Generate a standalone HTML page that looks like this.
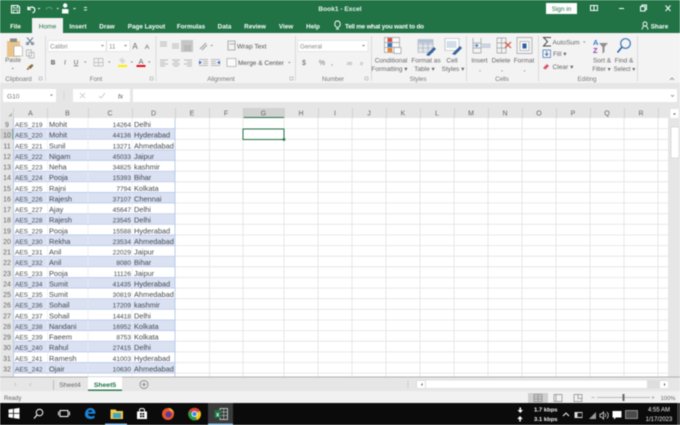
<!DOCTYPE html>
<html><head><meta charset="utf-8"><title>Book1 - Excel</title>
<style>
html,body{margin:0;padding:0;width:680px;height:425px;overflow:hidden;background:#fff}
svg{display:block;filter:blur(0.5px)}
text{font-family:"Liberation Sans",sans-serif}
.g text{font-size:7.4px;fill:#444850}
.g text:nth-child(4n+1){font-size:6.5px}
.g text:nth-child(4n+3){font-size:6.6px}
.h text{font-size:7px;fill:#666;text-anchor:middle}
.t text{font-size:6.3px;fill:#fff;text-anchor:middle;font-weight:bold}
.m text{text-anchor:middle}
.l text{font-size:6.2px;fill:#777;text-anchor:middle}
</style></head><body>
<svg width="680" height="425" viewBox="0 0 680 425" xmlns="http://www.w3.org/2000/svg">
<rect width="680" height="425" fill="#fff"/>
<!-- title bar -->
<rect width="680" height="33" fill="#217346"/>
<g fill="none" stroke="#fff" stroke-width="1.1">
<path d="M11.5 5.5h6.5l1.5 1.5v6h-8z"/><path d="M13.5 5.5v2.5h4v-2.5M13.5 13v-3h4v3" stroke-width=".8"/>
<path d="M28 6.5v3h3M28.3 9.2c1-2.5 5.500-3 6.500 0 .5 2-1 3.500-2.500 3.500" stroke-width="1.2"/>
<path d="M46 9.500c1-2.500 5-3 6.300 0" stroke="#5d9a78"/>
</g>
<path d="M63 5.500a2.200 2.200 0 1 1 4.400 0a2.200 2.200 0 1 1-4.400 0M62 9h5.500l1.500 1.500-1 1.500 1 1.500h-7z" fill="#fff"/>
<path d="M37.500 8h3l-1.500 1.500zM56.500 8h2.500l-1.200 1.500zM73 8h3l-1.500 1.500zM84 7h3v1h-3zM84 9.500h3v1h-3z" fill="#e6f0ea"/>
<text x="340" y="11" font-size="6.600" fill="#e8f2ec" text-anchor="middle" font-weight="bold">Book1 - Excel</text>
<rect x="546" y="3" width="31" height="11" fill="#fff"/>
<text x="561.500" y="11" font-size="6.400" fill="#217346" text-anchor="middle">Sign in</text>
<g fill="none" stroke="#fff" stroke-width="1">
<path d="M590.500 5.500h7v5h-7zM594 5.500v5"/><path d="M619 8.500h5"/><path d="M640.500 6.500h4.500v4.500h-4.500zM642 6.500v-1.500h4.500v4.500h-1.500"/><path d="M665.500 5.500l5 5.500M670.500 5.500l-5 5.500"/>
</g>
<!-- tabs -->
<rect x="32" y="18" width="31" height="16" fill="#f3f3f3"/>
<g class="t">
<text x="15.500" y="28.500">File</text><text x="78" y="28.500">Insert</text><text x="107" y="28.500">Draw</text><text x="146.500" y="28.500">Page Layout</text><text x="191" y="28.500">Formulas</text><text x="224.500" y="28.500">Data</text><text x="255" y="28.500">Review</text><text x="286" y="28.500">View</text><text x="313" y="28.500">Help</text><text x="384.500" y="28.500" textLength="79">Tell me what you want to do</text><text x="659.500" y="28.500">Share</text>
</g>
<text x="47.500" y="28.500" font-size="6.600" fill="#217346" text-anchor="middle">Home</text>
<path d="M337 27.500c-3.500-2-2.500-6.500.5-6.500s4 4.500.5 6.500zM336 29h3" fill="none" stroke="#fff" stroke-width=".9"/>
<path d="M642 29.500c.5-3 1.500-3.500 3-3.500s2.500.5 3 3.500M643 24a2 2 0 1 1 4 0a2 2 0 1 1-4 0" fill="none" stroke="#fff" stroke-width=".9"/>
<!-- ribbon -->
<rect y="33" width="680" height="50" fill="#f3f3f3"/>
<rect y="83" width="680" height="25" fill="#e6e6e6"/>
<g fill="#dadada"><rect x="45" y="36" width="1" height="45"/><rect x="155.500" y="36" width="1" height="45"/><rect x="295" y="36" width="1" height="45"/><rect x="371" y="36" width="1" height="45"/><rect x="466" y="36" width="1" height="45"/><rect x="538" y="36" width="1" height="45"/><rect x="637" y="36" width="1" height="45"/></g>
<!-- clipboard -->
<rect x="7" y="41" width="13" height="16" fill="#e8c48a"/><rect x="10" y="38.500" width="7" height="3.500" fill="#8a8a8a"/><path d="M14 46h7l1.500 1.500v8.500h-8.500z" fill="#fff" stroke="#a0a0a0" stroke-width=".6"/>
<path d="M27 37.500l6 7M33 37.500l-6 7" stroke="#6d7f99" stroke-width="1"/><circle cx="27.500" cy="43.500" r="1.300" fill="none" stroke="#6d7f99" stroke-width=".7"/><circle cx="32.500" cy="43.500" r="1.300" fill="none" stroke="#6d7f99" stroke-width=".7"/>
<path d="M26.500 50h5v6h-5zM29 52.500h5v5.500h-5z" fill="#f7f7f7" stroke="#a8a8a8" stroke-width=".7"/>
<path d="M28 67l4-3 1.500 1.500-3 3.500zM26.500 69l2-1.500 1 1.500-2 1z" fill="#8a6a3e"/>
<text x="13" y="62" font-size="6.200" fill="#666" text-anchor="middle">Paste</text>
<path d="M11.500 68h2.500l-1.200 1.300z" fill="#777"/>
<path d="M39 77h3v3h-3z" fill="none" stroke="#999" stroke-width=".5"/><path d="M150 77h3v3h-3zM290 77h3v3h-3zM365 77h3v3h-3z" fill="none" stroke="#999" stroke-width=".5"/>
<g class="l"><text x="18.500" y="81">Clipboard</text><text x="96" y="81">Font</text><text x="221" y="81">Alignment</text><text x="333" y="81">Number</text><text x="418" y="81">Styles</text><text x="502" y="81">Cells</text><text x="587" y="81">Editing</text></g>
<!-- font -->
<rect x="48" y="40.500" width="58" height="11" fill="#fff" stroke="#dcdcdc" stroke-width=".6"/><rect x="107" y="40.500" width="23" height="11" fill="#fff" stroke="#dcdcdc" stroke-width=".6"/>
<text x="50" y="48.500" font-size="6.200" fill="#888">Calibri</text><text x="109" y="48.500" font-size="6.200" fill="#888">11</text>
<path d="M101 45h3l-1.500 1.500zM124 45h3l-1.500 1.500z" fill="#777"/>
<text x="135" y="49" font-size="8" fill="#666" text-anchor="middle">A</text><text x="147" y="49" font-size="6.800" fill="#666" text-anchor="middle">A</text>
<text x="53" y="64.500" font-size="6.400" fill="#555" font-weight="bold" text-anchor="middle">B</text><text x="65" y="64.500" font-size="6.400" fill="#555" font-style="italic" text-anchor="middle">I</text><text x="76" y="64.500" font-size="6.400" fill="#555" text-decoration="underline" text-anchor="middle">U</text>
<path d="M94 58.500h9v7.500h-9zM98.500 58.500v7.500M94 62.500h9" fill="none" stroke="#b5b5b5" stroke-width=".7"/>
<path d="M119 60l3-2.500 3.500 3.500-3 3z" fill="#d9d9d9"/><rect x="118" y="65" width="9" height="2" fill="#ffee00"/>
<text x="141" y="64" font-size="7.500" fill="#666" text-anchor="middle">A</text><rect x="136.500" y="65" width="9" height="2" fill="#e00d1c"/>
<path d="M84 61.500h2.500l-1.200 1.300zM108 61.500h2.500l-1.200 1.300zM130.500 61.500h2.500l-1.200 1.300zM148 61.500h2.500l-1.200 1.300z" fill="#777"/>
<!-- alignment -->
<rect x="181" y="40" width="12" height="12" fill="#c6c6c6"/>
<g stroke="#a8a8a8" stroke-width=".8" fill="none">
<path d="M160 42h7M160 44h7M160 46h7M172 44h7M172 46h7M172 48h7M184 46h7M184 48h7M184 50h7"/>
<path d="M160 60h8M160 62h5M160 64h8M160 66h5M172 60h8M173.500 62h5M172 64h8M173.500 66h5M184 60h8M187 62h5M184 64h8M187 66h5"/>
<path d="M199 59.500h9M199 65.500h9M211 59.500h9M211 65.500h9M203 61.500h5M203 63.500h5M211 61.500h5M211 63.500h5"/>
</g>
<path d="M199 60.500l3 2-3 2zM220 60.500l-3 2 3 2z" fill="#3b6fc0"/>
<path d="M200 49l6-6M202 50l5-5" stroke="#9a9a9a" stroke-width="1"/><path d="M210.500 45h2.500l-1.200 1.300z" fill="#777"/>
<path d="M228 41h7v9h-7zM229.500 44h5" fill="none" stroke="#999" stroke-width=".8"/>
<text x="237" y="48.500" font-size="6.600" fill="#555">Wrap Text</text>
<rect x="227" y="58.500" width="9" height="8" fill="#fafafa" stroke="#a5a5a5" stroke-width=".7"/>
<text x="238" y="65" font-size="6.500" fill="#555">Merge &amp; Center</text>
<path d="M288 62h2.500l-1.200 1.300z" fill="#777"/>
<!-- number -->
<rect x="298" y="40.500" width="70" height="11" fill="#fff" stroke="#dcdcdc" stroke-width=".6"/>
<text x="300" y="48.500" font-size="6.200" fill="#888">General</text><path d="M362 45h3l-1.500 1.500z" fill="#777"/>
<text x="304" y="65" font-size="7" fill="#666" text-anchor="middle">$</text><text x="322" y="65" font-size="7" fill="#777" text-anchor="middle">%</text><text x="332" y="65" font-size="7" fill="#666" text-anchor="middle">,</text>
<text x="349" y="65" font-size="4.500" fill="#7a8ca5" text-anchor="middle">.00</text><text x="361" y="65" font-size="4.500" fill="#7a8ca5" text-anchor="middle">.0</text>
<!-- styles -->
<path d="M384.500 37.500h15v15h-15zM384.500 42.500h15M384.500 47.500h15M392 37.500v15" fill="#fafafa" stroke="#9c9c9c" stroke-width=".7"/>
<rect x="387.500" y="38" width="4.500" height="4" fill="#d9503f"/><rect x="387.500" y="43" width="4.500" height="4" fill="#3a77c4"/><rect x="387.500" y="48" width="4.500" height="4" fill="#e98432"/>
<rect x="394" y="47.500" width="7" height="6" fill="#fff" stroke="#888" stroke-width=".6"/>
<path d="M418 39.500h15v13h-15zM418 44h15M418 48h15M423 39.500v13M428 39.500v13" fill="#dfe6ef" stroke="#a7a7a7" stroke-width=".6"/><rect x="418" y="39.500" width="15" height="3.500" fill="#b3c3d8"/>
<path d="M426 55l8-8 2 2-7 7z" fill="#35639d"/>
<path d="M445 38.500h14v12h-14z" fill="#fff" stroke="#a7a7a7" stroke-width=".6"/><rect x="446.500" y="41" width="10" height="7" fill="#d4deeb"/><path d="M452 54l8-8 2 2-7 7z" fill="#35639d"/>
<g font-size="6.500" fill="#666" class="m">
<text x="391" y="62.500">Conditional</text><text x="389.500" y="71">Formatting ▾</text><text x="426" y="62.500">Format as</text><text x="424.500" y="71">Table ▾</text><text x="452" y="62.500">Cell</text><text x="453" y="71">Styles ▾</text>
<text x="479.500" y="62.500">Insert</text><text x="501" y="62.500">Delete</text><text x="524" y="62.500">Format</text>
<text x="602" y="62.500">Sort &amp;</text><text x="624" y="62.500">Find &amp;</text><text x="601.500" y="71" font-size="6.100">Filter ▾</text><text x="624.500" y="71" font-size="6.100">Select ▾</text>
</g>
<!-- cells -->
<g fill="none" stroke="#9c9c9c" stroke-width=".7"><path d="M473 38v15M481 38v15M473 43h8M473 48h8M473 53h8"/><path d="M497 38h9v15h-9zM497 43h9M497 48h9M501.500 38v15"/><path d="M517 37.500h15v16h-15z"/></g>
<rect x="481" y="44" width="9" height="3.500" fill="#d0d8e4" stroke="#9fb1c9" stroke-width=".5"/><path d="M474 45.500l4 0M476 44l2 1.500-2 1.500" stroke="#3a77c4" fill="none" stroke-width=".8"/>
<path d="M505 42l6 6M511 42l-6 6" stroke="#d1503f" stroke-width="1.200"/>
<rect x="520" y="41.500" width="9" height="9" fill="#fafafa" stroke="#9c9c9c" stroke-width=".6"/><rect x="522.500" y="43.500" width="4" height="5" fill="#2f5f9e"/>
<path d="M479 70.500h2l-1 1zM501 70.500h2l-1 1zM523.500 70.500h2l-1 1z" fill="#777"/>
<!-- editing -->
<path d="M551 37.500h-7.500l4 4-4 4.500h7.500" fill="none" stroke="#4a4a4a" stroke-width="1"/>
<text x="552.500" y="44.500" font-size="6.600" fill="#666">AutoSum</text><path d="M583 41.500h2.500l-1.200 1.300z" fill="#777"/>
<rect x="543" y="50" width="7.500" height="7.500" fill="#f7f7f7" stroke="#4a7bb8" stroke-width=".8"/><path d="M546.700 51v4M545 53.500l1.700 2 1.700-2" stroke="#3467a8" fill="none" stroke-width=".8"/>
<text x="553" y="56" font-size="6.600" fill="#666">Fill ▾</text>
<path d="M543 68l4-4 2 2-3.500 3.500z" fill="#e0506a"/><text x="552.500" y="68.800" font-size="6.600" fill="#666">Clear ▾</text>
<text x="593" y="45" font-size="7.500" fill="#3a77c4" font-weight="bold">A</text><text x="593" y="53" font-size="7.500" fill="#8d3fa8" font-weight="bold">Z</text><path d="M599 43h9l-3.500 4v5l-2 1.500v-6.500z" fill="#909090"/>
<circle cx="625.500" cy="43.500" r="4.800" fill="none" stroke="#3c76b8" stroke-width="1.200"/><path d="M622 47l-4.500 5.500" stroke="#2c65a8" stroke-width="1.600"/>
<path d="M670 80l2-2 2 2" fill="none" stroke="#777" stroke-width=".7"/>
<!-- formula bar -->
<rect x="3" y="89" width="53" height="13" fill="#fff"/><text x="7" y="98.500" font-size="6.600" fill="#777">G10</text><path d="M50 94.500h3l-1.500 1.500z" fill="#777"/>
<rect x="73" y="89" width="57" height="13" fill="#fff"/><rect x="133" y="89" width="544" height="13" fill="#fff"/>
<path d="M64 92v7" stroke="#c8c8c8" stroke-dasharray="1 1"/>
<path d="M80 93l5 5M85 93l-5 5" stroke="#c3c3c3" stroke-width=".8"/><path d="M99 96l2 2 4-5" stroke="#c3c3c3" fill="none" stroke-width=".8"/>
<text x="120.500" y="98.500" font-size="6.500" font-style="italic" fill="#555" text-anchor="middle">fx</text>
<path d="M671 95l1.500 1.500 1.500-1.500" fill="none" stroke="#777" stroke-width=".7"/>
<!-- headers -->
<rect y="108" width="668" height="10" fill="#e6e6e6"/>
<rect x="243" y="108" width="41" height="10" fill="#d2d2d2"/><rect x="243" y="117" width="41" height="1" fill="#217346"/>
<path d="M12 116.500h-4l4-4z" fill="#b5b5b5"/>
<g stroke="#c9c9c9" stroke-width=".7"><path d="M13.500 108v10M47.500 108v10M88.500 108v10M132.500 108v10M175.500 108v10M209.500 108v10M243.500 108v10M284.500 108v10M318.500 108v10M352.500 108v10M386.500 108v10M420.500 108v10M454.500 108v10M488.500 108v10M522.500 108v10M556.500 108v10M590.500 108v10M624.500 108v10M658.500 108v10"/></g>
<g class="h"><text x="30.500" y="115.500">A</text><text x="67.500" y="115.500">B</text><text x="110" y="115.500">C</text><text x="153.500" y="115.500">D</text><text x="192" y="115.500">E</text><text x="226" y="115.500">F</text><text x="263.500" y="115.500">G</text><text x="301" y="115.500">H</text><text x="335" y="115.500">I</text><text x="369" y="115.500">J</text><text x="403" y="115.500">K</text><text x="437" y="115.500">L</text><text x="471" y="115.500">M</text><text x="505" y="115.500">N</text><text x="539" y="115.500">O</text><text x="573" y="115.500">P</text><text x="607" y="115.500">Q</text><text x="641" y="115.500">R</text></g>
<!-- row header bg -->
<rect x="0" y="118" width="13" height="259" fill="#e6e6e6"/>
<rect x="0" y="128.600" width="13" height="10.700" fill="#d2d2d2"/><rect x="12.500" y="128.600" width="1" height="10.700" fill="#217346"/>
<!-- bands -->
<g fill="#d9e1f2"><rect x="13" y="128.600" width="162" height="10.700"/><rect x="13" y="149.900" width="162" height="10.600"/><rect x="13" y="171.200" width="162" height="10.600"/><rect x="13" y="192.400" width="162" height="10.600"/><rect x="13" y="213.700" width="162" height="10.600"/><rect x="13" y="234.900" width="162" height="10.700"/><rect x="13" y="256.200" width="162" height="10.600"/><rect x="13" y="277.500" width="162" height="10.600"/><rect x="13" y="298.700" width="162" height="10.600"/><rect x="13" y="320" width="162" height="10.600"/><rect x="13" y="341.200" width="162" height="10.700"/><rect x="13" y="362.500" width="162" height="10.600"/></g>
<!-- grid -->
<g stroke="#e3e3e3" stroke-width=".8" fill="none">
<path d="M175 128.600H668M175 139.300H668M175 149.900H668M175 160.500H668M175 171.200H668M175 181.800H668M175 192.400H668M175 203H668M175 213.700H668M175 224.300H668M175 234.900H668M175 245.600H668M175 256.200H668M175 266.800H668M175 277.500H668M175 288.100H668M175 298.700H668M175 309.300H668M175 320H668M175 330.600H668M175 341.200H668M175 351.900H668M175 362.500H668M175 373.100H668"/>
<path d="M209.500 118V377M243 118V377M284 118V377M318 118V377M352 118V377M386 118V377M420 118V377M454 118V377M488 118V377M522 118V377M556 118V377M590 118V377M624 118V377M658 118V377"/>
<path d="M47.500 118V377M88 118V377M132 118V377" stroke="#e9edf5"/>
</g>
<g stroke="#b4c6e7" stroke-width=".7" fill="none"><path d="M13 128.600H175M13 139.300H175M13 149.900H175M13 160.500H175M13 171.200H175M13 181.800H175M13 192.400H175M13 203H175M13 213.700H175M13 224.300H175M13 234.900H175M13 245.600H175M13 256.200H175M13 266.800H175M13 277.500H175M13 288.100H175M13 298.700H175M13 309.300H175M13 320H175M13 330.600H175M13 341.200H175M13 351.900H175M13 362.500H175M13 373.100H175"/><path d="M175 118V377M13.500 118V377" stroke-width=".9"/></g>
<!-- row numbers -->
<g class="h"><text x="7" y="127">9</text><text x="7" y="137.600">10</text><text x="7" y="148.300">11</text><text x="7" y="158.900">12</text><text x="7" y="169.500">13</text><text x="7" y="180.200">14</text><text x="7" y="190.800">15</text><text x="7" y="201.400">16</text><text x="7" y="212">17</text><text x="7" y="222.700">18</text><text x="7" y="233.300">19</text><text x="7" y="243.900">20</text><text x="7" y="254.600">21</text><text x="7" y="265.200">22</text><text x="7" y="275.800">23</text><text x="7" y="286.500">24</text><text x="7" y="297.100">25</text><text x="7" y="307.700">26</text><text x="7" y="318.300">27</text><text x="7" y="329">28</text><text x="7" y="339.600">29</text><text x="7" y="350.200">30</text><text x="7" y="360.900">31</text><text x="7" y="371.500">32</text></g>
<!-- data -->
<g class="g">
<text x="15" y="127">AES_219</text><text x="49" y="127">Mohit</text><text x="131" y="127" text-anchor="end">14264</text><text x="134" y="127">Delhi</text>
<text x="15" y="137.600">AES_220</text><text x="49" y="137.600">Mohit</text><text x="131" y="137.600" text-anchor="end">44136</text><text x="134" y="137.600">Hyderabad</text>
<text x="15" y="148.300">AES_221</text><text x="49" y="148.300">Sunil</text><text x="131" y="148.300" text-anchor="end">13271</text><text x="134" y="148.300">Ahmedabad</text>
<text x="15" y="158.900">AES_222</text><text x="49" y="158.900">Nigam</text><text x="131" y="158.900" text-anchor="end">45033</text><text x="134" y="158.900">Jaipur</text>
<text x="15" y="169.500">AES_223</text><text x="49" y="169.500">Neha</text><text x="131" y="169.500" text-anchor="end">34825</text><text x="134" y="169.500">kashmir</text>
<text x="15" y="180.200">AES_224</text><text x="49" y="180.200">Pooja</text><text x="131" y="180.200" text-anchor="end">15393</text><text x="134" y="180.200">Bihar</text>
<text x="15" y="190.800">AES_225</text><text x="49" y="190.800">Rajni</text><text x="131" y="190.800" text-anchor="end">7794</text><text x="134" y="190.800">Kolkata</text>
<text x="15" y="201.400">AES_226</text><text x="49" y="201.400">Rajesh</text><text x="131" y="201.400" text-anchor="end">37107</text><text x="134" y="201.400">Chennai</text>
<text x="15" y="212">AES_227</text><text x="49" y="212">Ajay</text><text x="131" y="212" text-anchor="end">45647</text><text x="134" y="212">Delhi</text>
<text x="15" y="222.700">AES_228</text><text x="49" y="222.700">Rajesh</text><text x="131" y="222.700" text-anchor="end">23545</text><text x="134" y="222.700">Delhi</text>
<text x="15" y="233.300">AES_229</text><text x="49" y="233.300">Pooja</text><text x="131" y="233.300" text-anchor="end">15588</text><text x="134" y="233.300">Hyderabad</text>
<text x="15" y="243.900">AES_230</text><text x="49" y="243.900">Rekha</text><text x="131" y="243.900" text-anchor="end">23534</text><text x="134" y="243.900">Ahmedabad</text>
<text x="15" y="254.600">AES_231</text><text x="49" y="254.600">Anil</text><text x="131" y="254.600" text-anchor="end">22029</text><text x="134" y="254.600">Jaipur</text>
<text x="15" y="265.200">AES_232</text><text x="49" y="265.200">Anil</text><text x="131" y="265.200" text-anchor="end">8080</text><text x="134" y="265.200">Bihar</text>
<text x="15" y="275.800">AES_233</text><text x="49" y="275.800">Pooja</text><text x="131" y="275.800" text-anchor="end">11126</text><text x="134" y="275.800">Jaipur</text>
<text x="15" y="286.500">AES_234</text><text x="49" y="286.500">Sumit</text><text x="131" y="286.500" text-anchor="end">41435</text><text x="134" y="286.500">Hyderabad</text>
<text x="15" y="297.100">AES_235</text><text x="49" y="297.100">Sumit</text><text x="131" y="297.100" text-anchor="end">30819</text><text x="134" y="297.100">Ahmedabad</text>
<text x="15" y="307.700">AES_236</text><text x="49" y="307.700">Sohail</text><text x="131" y="307.700" text-anchor="end">17209</text><text x="134" y="307.700">kashmir</text>
<text x="15" y="318.300">AES_237</text><text x="49" y="318.300">Sohail</text><text x="131" y="318.300" text-anchor="end">14418</text><text x="134" y="318.300">Delhi</text>
<text x="15" y="329">AES_238</text><text x="49" y="329">Nandani</text><text x="131" y="329" text-anchor="end">16952</text><text x="134" y="329">Kolkata</text>
<text x="15" y="339.600">AES_239</text><text x="49" y="339.600">Faeem</text><text x="131" y="339.600" text-anchor="end">8753</text><text x="134" y="339.600">Kolkata</text>
<text x="15" y="350.200">AES_240</text><text x="49" y="350.200">Rahul</text><text x="131" y="350.200" text-anchor="end">27415</text><text x="134" y="350.200">Delhi</text>
<text x="15" y="360.900">AES_241</text><text x="49" y="360.900">Ramesh</text><text x="131" y="360.900" text-anchor="end">41003</text><text x="134" y="360.900">Hyderabad</text>
<text x="15" y="371.500">AES_242</text><text x="49" y="371.500">Ojair</text><text x="131" y="371.500" text-anchor="end">10630</text><text x="134" y="371.500">Ahmedabad</text>
</g>
<!-- selection -->
<rect x="243" y="129" width="41" height="10.500" fill="none" stroke="#217346" stroke-width="1"/><rect x="282.800" y="138.300" width="2.400" height="2.400" fill="#217346"/>
<!-- vertical scrollbar -->
<rect x="668" y="108" width="12" height="269" fill="#e6e6e6"/><rect x="670.500" y="109" width="8" height="9" fill="#fff"/><path d="M673 114.500l1.500-1.500 1.500 1.500z" fill="#555"/>
<rect x="671" y="127" width="8" height="31" fill="#fff" stroke="#c6c6c6" stroke-width=".5"/>
<!-- sheet tabs -->
<rect y="377" width="680" height="14" fill="#e6e6e6"/><rect y="376.600" width="680" height=".9" fill="#a8a8a8"/>
<path d="M53.500 380v10" stroke="#a8a8a8" stroke-width=".7"/><rect x="88" y="377" width="34" height="13" fill="#fff"/><rect x="88" y="389.500" width="34" height="1.400" fill="#217346"/>
<text x="70" y="387" font-size="6.800" fill="#666" text-anchor="middle">Sheet4</text><text x="105" y="387" font-size="6.800" fill="#217346" text-anchor="middle" font-weight="bold">Sheet5</text>
<path d="M16 384.500l-1.500-1.500M16 384.500l-1.500 1.500M29.500 384.500l1.500-1.500M29.500 384.500l1.500 1.500" stroke="#bbb" stroke-width=".6"/>
<circle cx="144" cy="384.500" r="4" fill="none" stroke="#777" stroke-width=".7"/><path d="M142 384.500h4M144 382.500v4" stroke="#777" stroke-width=".7"/>
<path d="M408 381v7" stroke="#bbb" stroke-dasharray="1 1"/>
<rect x="416" y="380" width="252" height="8.500" fill="#dedede"/><rect x="417" y="381" width="8" height="7" fill="#fff"/><rect x="426" y="380.500" width="221" height="7.500" fill="#fff"/><rect x="660" y="381" width="8" height="7" fill="#fff"/>
<path d="M422.500 383l-1.500 1.500 1.500 1.500zM664 383l1.500 1.500-1.500 1.500z" fill="#555"/>
<!-- status bar -->
<rect y="391" width="680" height="12" fill="#f1f1f1"/>
<text x="4" y="399.800" font-size="6" fill="#666">Ready</text>
<rect x="528" y="393" width="20" height="10" fill="#cfcfcf"/>
<g fill="none" stroke="#888" stroke-width=".7"><path d="M534 394.500h8v7h-8zM534 396.800h8M534 399.100h8M538 394.500v7"/><path d="M554 394.500h8v7h-8zM556 394.500v7"/><path d="M574 394.500h8v7h-8zM578 394.500v4h4"/></g>
<path d="M591.500 397.500h3M597 397.500h53M651.500 397.500h3M653 396v3" stroke="#a8a8a8" stroke-width=".7"/><rect x="622.500" y="394" width="2" height="7" fill="#666"/>
<text x="668" y="399.800" font-size="5.800" fill="#666" text-anchor="middle">100%</text>
<!-- taskbar -->
<rect y="403" width="680" height="22" fill="#0b0b0b"/>
<path d="M8.500 409.500l4.500-.7v4.200h-4.500zM13.800 408.700l5.700-.8v5.100h-5.700zM8.500 413.800h4.500v4.200l-4.500-.7zM13.800 413.800h5.700v5.100l-5.700-.8z" fill="#fff"/>
<circle cx="39.500" cy="412.500" r="3.300" fill="none" stroke="#fff" stroke-width="1"/><path d="M37 415l-3 3.500" stroke="#fff" stroke-width="1.100"/>
<path d="M60 410.500h8v6h-8zM58.500 411.500v4M69.500 411.500v4" fill="none" stroke="#fff" stroke-width=".9"/>
<path d="M85 414.500c0-4 2.500-6.500 5.500-6.500s5 2.300 5 5.800h-7.500c.2 2.800 3.600 3.400 6.500 1.700v2.500c-4.500 2.200-9.500.5-9.500-3.500zM88 412h4.300c0-2.500-3.800-2.500-4.300 0z" fill="#1b84d8" fill-rule="evenodd"/>
<path d="M110.500 409.500h5l1.500 1.500h6v8h-12.500z" fill="#f5c84a"/><rect x="113" y="413" width="8" height="5" fill="#3ea7c0"/><rect x="105" y="423.500" width="22" height="1.500" fill="#7db6e6"/>
<path d="M137 411.500h10v7.500h-10z" fill="#fff"/><path d="M139.500 411.500v-1.500c0-2 5-2 5 0v1.500" fill="none" stroke="#fff"/><path d="M140 413h1.800v1.800H140zM142.500 413h1.800v1.800h-1.800zM140 415.500h1.800v1.800H140zM142.500 415.500h1.800v1.800h-1.800z" fill="#0b0b0b"/>
<circle cx="168" cy="414" r="6" fill="#e8552c"/><path d="M168 408c4 0 6 3 6 6-1-2-2-3-3.500-3z" fill="#fbb03b"/><circle cx="168.500" cy="414.500" r="3" fill="#5b3a9c"/>
<circle cx="194.500" cy="414" r="6.300" fill="#d94335"/><path d="M194.500 414l5.500-3.100a6.300 6.300 0 0 1-3.100 9.200z" fill="#f6c31c"/><path d="M194.500 414l2.400 6.100a6.300 6.300 0 0 1-7.800-3z M194.500 414l-5.400 3.100a6.300 6.300 0 0 1 0-6.300z" fill="#2a9b49"/><circle cx="194.500" cy="414" r="3" fill="#fff"/><circle cx="194.500" cy="414" r="2.200" fill="#3f83ee"/>
<rect x="208" y="403" width="25" height="22" fill="#3a3a3a"/><rect x="208" y="423.500" width="25" height="1.500" fill="#7db6e6"/>
<rect x="220" y="408.500" width="7.500" height="11" fill="none" stroke="#d5e5dc" stroke-width=".8"/><path d="M220 412h7.500M220 415.500h7.500M223.700 408.500v11" stroke="#d5e5dc" stroke-width=".5"/>
<rect x="214.500" y="410" width="6.500" height="8" fill="#1f7244"/><text x="217.700" y="416.500" font-size="6" fill="#fff" text-anchor="middle" font-weight="bold">x</text>
<path d="M519.500 407.500h1.500v2.500h2l-2.700 3-2.800-3h2z" fill="#fff"/><path d="M520 416l2.800 3h-2v2.500h-1.500v-2.500h-2.100z" fill="#fff"/>
<g font-size="5.900" fill="#f2f2f2" font-weight="bold"><text x="534" y="411.500">1.7 kbps</text><text x="534" y="421">3.1 kbps</text></g>
<path d="M563 416l3-3 3 3" fill="none" stroke="#fff" stroke-width=".9"/>
<path d="M574.500 412h8v6h-8z" fill="#ddd"/><rect x="577.500" y="413" width="4.500" height="4" fill="#111"/>
<path d="M589 419l7-7v7z" fill="#9a9a9a"/>
<path d="M600 414v3h1.500l2 2v-7l-2 2zM605 413.500c1 1 1 2.500 0 3.500M607 412c1.800 2 1.800 4.500 0 6.500" fill="none" stroke="#e0e0e0" stroke-width=".8"/>
<path d="M612.500 411h9v6.500h-5.500l-2 2v-2h-1.500z" fill="#fff"/>
<rect x="625.500" y="410.500" width="12" height="8" fill="#4a4a4a" stroke="#ccc" stroke-width=".6"/>
<g font-size="6" fill="#f2f2f2" text-anchor="middle"><text x="659" y="411.500">4:55 AM</text><text x="659" y="421">1/17/2023</text></g>
<rect x="677.500" y="403" width="1" height="22" fill="#666"/>
</svg>
</body></html>
